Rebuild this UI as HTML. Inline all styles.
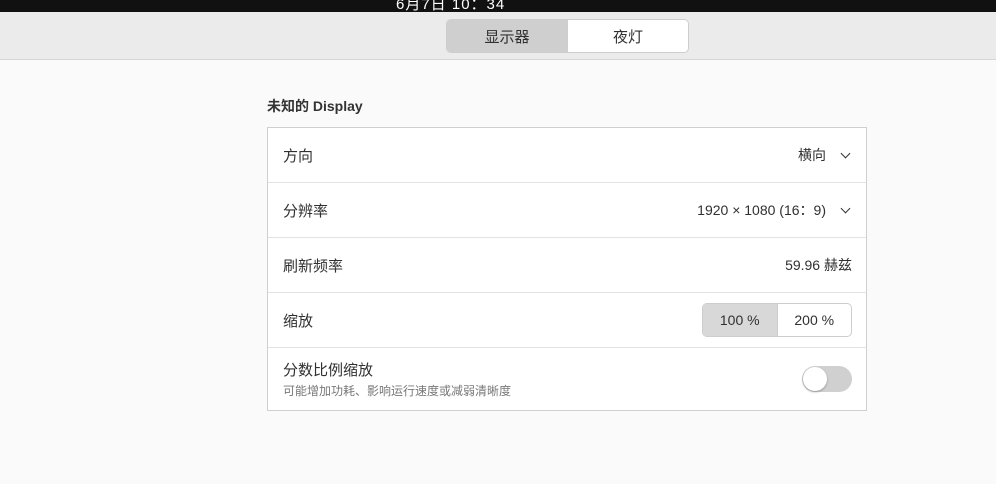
<!DOCTYPE html>
<html><head><meta charset="utf-8"><style>
*{margin:0;padding:0;box-sizing:border-box}
body{width:996px;height:484px;overflow:hidden;background:#fafafa;font-family:"Liberation Sans","Noto Sans CJK SC",sans-serif;color:#303030;position:relative}
.top{position:absolute;left:0;top:0;width:996px;height:12px;background:#111;overflow:hidden}
.top span{position:absolute;left:396px;top:-7px;color:#fff;font-size:15px;letter-spacing:1px}
.hdr{position:absolute;left:0;top:12px;width:996px;height:48px;background:#ebebeb;border-bottom:1px solid #d6d6d6}
.seg{position:absolute;left:446px;top:7px;width:243px;height:34px;border:1px solid #cdcdcd;border-radius:5px;display:flex;overflow:hidden;font-size:15px}
.seg div{flex:1;display:flex;align-items:center;justify-content:center}
.title{position:absolute;left:267px;top:96px;font-size:14px;font-weight:bold;color:#333}
.panel{position:absolute;left:267px;top:127px;width:600px;height:284px;border:1px solid #cfcfcf;background:#fff}
.row{height:55px;border-bottom:1px solid #e3e3e3;display:flex;align-items:center;justify-content:space-between;padding:0 14px 0 15px;font-size:15px}
.row:last-child{border:none;height:62px}
.r{display:flex;align-items:center;font-size:14px}
.chev{width:7px;height:7px;border-right:1.5px solid #333;border-bottom:1.5px solid #333;transform:rotate(45deg);margin:-4px 3px 0 16px}
.sc{display:flex;width:150px;height:34px;border:1px solid #cdcdcd;border-radius:5px;overflow:hidden;font-size:14px}
.sc div{flex:1;display:flex;align-items:center;justify-content:center}
.tg{width:50px;height:26px;border-radius:13px;background:#d0d0d0;position:relative}
.tg:after{content:"";position:absolute;left:1px;top:1px;width:24px;height:24px;border-radius:50%;background:#fff;box-shadow:0 1px 2px rgba(0,0,0,.3)}
</style></head><body>
<div class="top"><span>6月7日 10：34</span></div>
<div class="hdr"><div class="seg"><div style="background:#cfcfcf;border-right:1px solid #cdcdcd">显示器</div><div style="background:#fff">夜灯</div></div></div>
<div class="title">未知的 Display</div>
<div class="panel">
<div class="row"><span>方向</span><span class="r">横向<i class="chev"></i></span></div>
<div class="row"><span>分辨率</span><span class="r">1920 × 1080 (16：9)<i class="chev"></i></span></div>
<div class="row"><span>刷新频率</span><span class="r">59.96 赫兹</span></div>
<div class="row"><span>缩放</span><div class="sc"><div style="background:#d8d8d8;border-right:1px solid #cdcdcd">100 %</div><div>200 %</div></div></div>
<div class="row"><div><div>分数比例缩放</div><div style="font-size:12px;color:#777;margin-top:2px">可能增加功耗、影响运行速度或减弱清晰度</div></div><div class="tg"></div></div>
</div>
</body></html>
